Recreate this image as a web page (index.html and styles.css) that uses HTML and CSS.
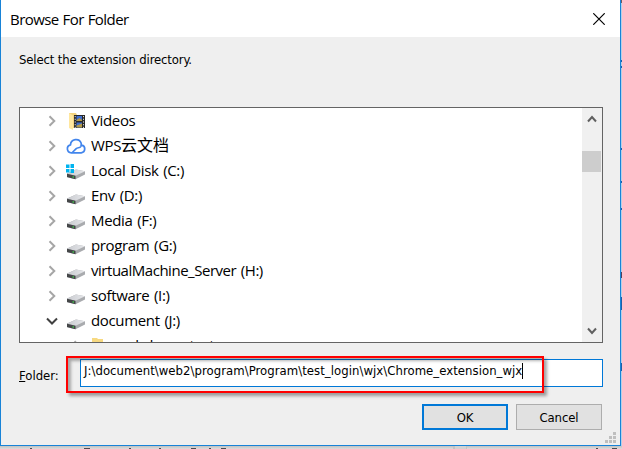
FILE: index.html
```html
<!DOCTYPE html>
<html lang="en">
<head>
<meta charset="utf-8">
<title>Browse For Folder</title>
<link rel="stylesheet" href="styles.css">
</head>
<body>
<svg class="defs" aria-hidden="true">
  <defs>
    <linearGradient id="top" x1="0" x2="1"><stop offset="0" stop-color="#c9cbd0"/><stop offset="1" stop-color="#e6e7ea"/></linearGradient>
    <symbol id="drive" viewBox="0 0 20 22">
      <path d="M1 13.500 10 9.500l9 1.800v3.200L9.500 19.300 1 17.300z" fill="#a9abae"/>
      <path d="M1 13.700 10 9.500l9 1.800-9.500 4.500z" fill="url(#top)"/>
      <path d="M1 13.700l8.500 2.100v3.400L1 17z" fill="#444648"/>
      <path d="M6.500 16.300h1.500v1.500H6.500z" fill="#3fbf4a"/>
    </symbol>
    <symbol id="windrive" viewBox="0 0 20 22">
      <use href="#drive" width="20" height="22"/>
      <path d="M0 4.500h3.500V8H0zM4.500 4H8v4H4.500zM0 9h3.500v3.500H0zM4.500 9H8v4H4.500z" fill="#00b4f0"/>
    </symbol>
    <symbol id="cloud" viewBox="0 0 20 22">
      <path d="M5.300 17.800a4 4 0 0 1-.8-7.900 5.500 5.500 0 0 1 10.700-1.600c.2 1.300 0 2.200-.3 3-1.200 2.200-3.200.8-4.700 2.300l-3.400 3.400c-.5.500-.9.800-1.500.8h10a3.900 3.900 0 0 0 .300-7.700" fill="none" stroke="#4285ec" stroke-width="1.700" stroke-linecap="round" stroke-linejoin="round"/>
    </symbol>
    <symbol id="videos" viewBox="0 0 20 22">
      <path d="M3 3h7l1 2v13H3z" fill="#f4d37c"/>
      <path d="M3 3l4 2.500V20l-4-2z" fill="#ffe79f"/>
      <path d="M8 5h11v13H8z" fill="#282828"/>
      <path d="M10.500 6H16v5h-5.500zM10.500 12.500H16v5h-5.500z" fill="#3f6ed0"/>
      <path d="M10.500 10l3-2 2.500 2v1h-5.500zM10.500 15.500l5.500-2v4h-5.500z" fill="#b39945"/>
      <path d="M9.200 6v12M17.500 6v12" stroke="#ddd" stroke-width="1" stroke-dasharray="1.200 1.500"/>
    </symbol>
    <symbol id="folder" viewBox="0 0 20 22">
      <path d="M1 3h5l1 1h5v15H1z" fill="#f7d981"/>
    </symbol>
    <symbol id="chev" viewBox="0 0 12 12"><path d="M3.500 1.200 8.300 6l-4.800 4.800" fill="none" stroke="#a6a6a6" stroke-width="2"/></symbol>
    <symbol id="chevdown" viewBox="0 0 12 12"><path d="M1 3.500l5 5 5-5" fill="none" stroke="#404040" stroke-width="2"/></symbol>
  </defs>
</svg>
<main class="dialog">
  <header class="titlebar">
    <h1 class="title">Browse For Folder</h1>
    <svg class="close" viewBox="0 0 12 12"><path d="M.3.3l11.400 11.400M11.700.3L.3 11.700" stroke="#000" stroke-width="1.200"/></svg>
  </header>
  <p class="prompt">Select the extension directory.</p>
  <section class="tree">
    <ul class="rows">
      <li class="row"><svg class="arrow"><use href="#chev"/></svg><svg class="icon"><use href="#videos"/></svg><span class="name">Videos</span></li>
      <li class="row"><svg class="arrow"><use href="#chev"/></svg><svg class="icon"><use href="#cloud"/></svg><span class="name">WPS<span class="cjk">云文档</span></span></li>
      <li class="row"><svg class="arrow"><use href="#chev"/></svg><svg class="icon"><use href="#windrive"/></svg><span class="name">Local Disk (C:)</span></li>
      <li class="row"><svg class="arrow"><use href="#chev"/></svg><svg class="icon"><use href="#drive"/></svg><span class="name">Env (D:)</span></li>
      <li class="row"><svg class="arrow"><use href="#chev"/></svg><svg class="icon"><use href="#drive"/></svg><span class="name">Media (F:)</span></li>
      <li class="row"><svg class="arrow"><use href="#chev"/></svg><svg class="icon"><use href="#drive"/></svg><span class="name">program (G:)</span></li>
      <li class="row"><svg class="arrow"><use href="#chev"/></svg><svg class="icon"><use href="#drive"/></svg><span class="name long">virtualMachine_Server (H:)</span></li>
      <li class="row"><svg class="arrow"><use href="#chev"/></svg><svg class="icon"><use href="#drive"/></svg><span class="name">software (I:)</span></li>
      <li class="row"><svg class="arrow"><use href="#chevdown"/></svg><svg class="icon"><use href="#drive"/></svg><span class="name">document (J:)</span></li>
      <li class="row child"><svg class="arrow"><use href="#chev"/></svg><svg class="icon"><use href="#folder"/></svg><span class="name">webdemo_test</span></li>
    </ul>
    <div class="scrollbar">
      <svg class="sarrow" viewBox="0 0 10 8"><path d="M1 6.500l4-4.500 4 4.500" fill="none" stroke="#606060" stroke-width="2"/></svg>
      <div class="track"><div class="thumb"></div></div>
      <svg class="sarrow" viewBox="0 0 10 8"><path d="M1 1.500L5 6l4-4.500" fill="none" stroke="#606060" stroke-width="2"/></svg>
    </div>
  </section>
  <div class="field">
    <label class="label"><u>F</u>older:</label>
    <div class="input"><span class="path">J:\document\web2\program\Program\test_login\wjx\Chrome_extension_wjx</span><i class="caret"></i></div>
    <div class="highlight"></div>
  </div>
  <footer class="buttons">
    <button class="btn ok">OK</button>
    <button class="btn">Cancel</button>
  </footer>
  <svg class="grip" viewBox="0 0 11 11"><path d="M8 0h3v3H8zM4 4h3v3H4zM8 4h3v3H8zM0 8h3v3H0zM4 8h3v3H4zM8 8h3v3H8z" fill="#bfbfbf"/></svg>
</main>
<svg class="behind" viewBox="0 0 622 3">
  <path d="M453 0h14v3h-14z" fill="#c3c3c3"/>
  <path d="M455 0h11v3h-11z" fill="#d2d2d2"/>
  <path d="M30 2h2v1h-2zM84 2h6v1h-6zM129 2h2v1h-2zM159 2h2v1h-2zM191 2h5v1h-5zM209 2h2v1h-2zM221 2h5v1h-5zM596 2h2v1h-2zM612 2h5v1h-5z" fill="#4a4a50"/>
</svg>
<svg class="side" viewBox="0 0 1 446">
  <path d="M0 0h1v3H0z" fill="#705a60"/>
  <path d="M0 60h1v2H0zM0 66h1v2H0zM0 148h1v2H0zM0 181h1v2H0zM0 208h1v2H0zM0 297h1v13H0zM0 363h1v8H0z" fill="#1d5fa8"/>
  <path d="M0 272h1v6H0z" fill="#51405c"/>
</svg>
</body>
</html>
```

FILE: styles.css
```css
* { box-sizing: border-box; }
body { margin: 0; width: 622px; height: 449px; overflow: hidden; background: #d6d6d6; font-family: "DejaVu Sans Condensed", "DejaVu Sans", sans-serif; font-size: 13px; color: #000; }
.defs { position: absolute; width: 0; height: 0; }
.dialog { position: relative; width: 621px; height: 446px; border: 1px solid #1883d7; border-top: 0; background: #efefef; }
.titlebar { height: 37px; background: #fff; display: flex; align-items: center; justify-content: space-between; padding: 0 15px 0 9px; }
.title { margin: 0; font: 15px/20px "Open Sans", "Noto Sans", sans-serif; letter-spacing: -0.55px; word-spacing: 0.5px; white-space: nowrap; }
.close { width: 12px; height: 12px; }
.prompt { margin: 14px 0 0 18px; line-height: 18px; height: 56px; letter-spacing: -0.15px; }
.tree { margin-left: 18px; width: 584px; height: 236px; border: 1px solid #646464; background: #fff; display: flex; justify-content: space-between; overflow: hidden; }
.rows { list-style: none; margin: 0; padding: 0 0 0 26px; }
.row { height: 25px; display: flex; align-items: center; font: 15px/25px "Open Sans", "Noto Sans CJK SC", sans-serif; letter-spacing: -0.35px; word-spacing: 1.2px; white-space: nowrap; }
.long { letter-spacing: -0.47px; }
.cjk { font-size: 16px; letter-spacing: 0; }
.child { padding-left: 25px; }
.arrow { width: 12px; height: 12px; margin-right: 8px; }
.icon { width: 20px; height: 22px; margin-right: 5px; }
.scrollbar { width: 20px; background: #f0f0f0; display: flex; flex-direction: column; align-items: center; padding: 7px 0; }
.sarrow { width: 10px; height: 8px; }
.track { flex: 1; width: 100%; padding-top: 28px; }
.thumb { width: 19px; height: 21px; background: #cdcdcd; }
.field { position: relative; margin-top: 16px; padding-left: 18px; height: 28px; display: flex; align-items: center; }
.label { width: 61px; padding-top: 5px; }
.input { width: 523px; height: 28px; border: 1px solid #0078d7; background: #fff; display: flex; padding: 3px 0 0 3px; line-height: 16px; }
.path { white-space: nowrap; letter-spacing: 0.04px; }
.caret { width: 1px; height: 16px; background: #000; }
.highlight { position: absolute; left: 65px; top: -3px; width: 478px; height: 37px; border: 2px solid #f00; box-shadow: 3px 3px 3px rgba(0,0,0,.35), inset 3px 3px 3px rgba(0,0,0,.3); }
.buttons { display: flex; justify-content: flex-end; gap: 8px; margin: 17px 18px 0 0; }
.btn { width: 86px; height: 26px; padding: 0; border: 1px solid #adadad; background: #e1e1e1; color: #000; font: inherit; letter-spacing: -0.1px; }
.ok { border: 2px solid #0078d7; }
.grip { position: absolute; right: 4px; bottom: 2px; width: 11px; height: 11px; }
.behind { display: block; width: 622px; height: 3px; background: linear-gradient(#c2c2c2, #dcdcdc); }
.side { position: absolute; right: 0; top: 0; width: 1px; height: 446px; background: #b5cfe8; }
```
